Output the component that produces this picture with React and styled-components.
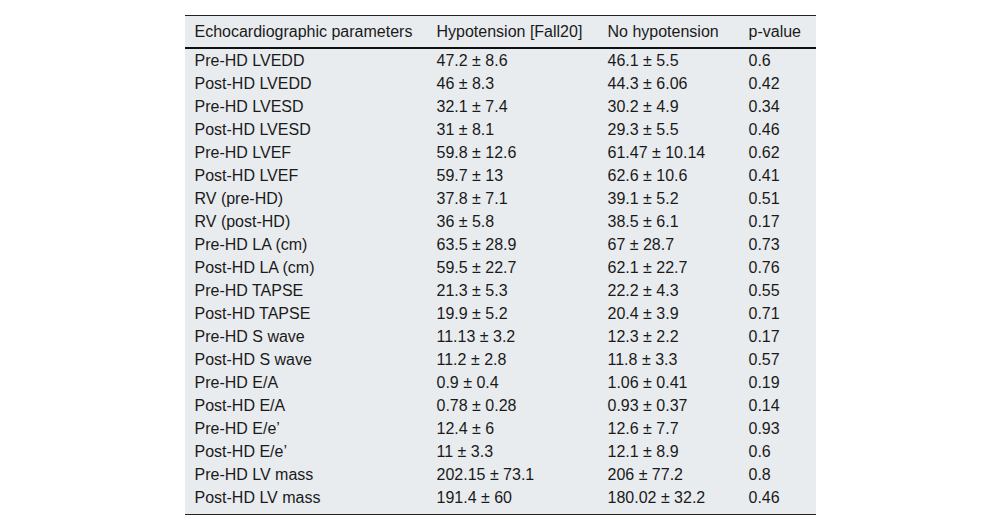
import React from 'react';
import styled, { createGlobalStyle } from 'styled-components';

const GlobalStyle = createGlobalStyle`
  body {
    margin: 0;
    background: #fff;
    font-family: 'Liberation Sans', Arial, sans-serif;
  }
`;

const Page = styled.div`
  display: flex;
  justify-content: center;
  padding-top: 15px;
`;

const Table = styled.table`
  width: 631px;
  border-collapse: collapse;
  table-layout: fixed;
  background: #e9ecef;
  color: #1a1a1a;
  font-size: 16px;
  border-top: 1px solid #222;
  border-bottom: 1px solid #222;
`;

const Col = styled.col`
  width: ${(p) => p.$w}px;
`;

const HeadCell = styled.th`
  text-align: left;
  font-weight: normal;
  padding: 0 10px;
  height: 31px;
  border-bottom: 2px solid #111;
  white-space: nowrap;
`;

const Row = styled.tr`
  td {
    padding-bottom: ${(p) => (p.$last ? '5px' : '0')};
  }
`;

const Cell = styled.td`
  padding: 0 10px;
  height: 23px;
  white-space: nowrap;
`;

const widths = [242, 171, 141, 77];

const rows = [
  ['Pre-HD LVEDD', '47.2 ± 8.6', '46.1 ± 5.5', '0.6'],
  ['Post-HD LVEDD', '46 ± 8.3', '44.3 ± 6.06', '0.42'],
  ['Pre-HD LVESD', '32.1 ± 7.4', '30.2 ± 4.9', '0.34'],
  ['Post-HD LVESD', '31 ± 8.1', '29.3 ± 5.5', '0.46'],
  ['Pre-HD LVEF', '59.8 ± 12.6', '61.47 ± 10.14', '0.62'],
  ['Post-HD LVEF', '59.7 ± 13', '62.6 ± 10.6', '0.41'],
  ['RV (pre-HD)', '37.8 ± 7.1', '39.1 ± 5.2', '0.51'],
  ['RV (post-HD)', '36 ± 5.8', '38.5 ± 6.1', '0.17'],
  ['Pre-HD LA (cm)', '63.5 ± 28.9', '67 ± 28.7', '0.73'],
  ['Post-HD LA (cm)', '59.5 ± 22.7', '62.1 ± 22.7', '0.76'],
  ['Pre-HD TAPSE', '21.3 ± 5.3', '22.2 ± 4.3', '0.55'],
  ['Post-HD TAPSE', '19.9 ± 5.2', '20.4 ± 3.9', '0.71'],
  ['Pre-HD S wave', '11.13 ± 3.2', '12.3 ± 2.2', '0.17'],
  ['Post-HD S wave', '11.2 ± 2.8', '11.8 ± 3.3', '0.57'],
  ['Pre-HD E/A', '0.9 ± 0.4', '1.06 ± 0.41', '0.19'],
  ['Post-HD E/A', '0.78 ± 0.28', '0.93 ± 0.37', '0.14'],
  ['Pre-HD E/e’', '12.4 ± 6', '12.6 ± 7.7', '0.93'],
  ['Post-HD E/e’', '11 ± 3.3', '12.1 ± 8.9', '0.6'],
  ['Pre-HD LV mass', '202.15 ± 73.1', '206 ± 77.2', '0.8'],
  ['Post-HD LV mass', '191.4 ± 60', '180.02 ± 32.2', '0.46'],
];

const App = () => {
  return (
    <>
      <GlobalStyle />
      <Page>
        <Table>
          <colgroup>
            {widths.map((w, i) => (
              <Col key={i} $w={w} />
            ))}
          </colgroup>
          <thead>
            <tr>
              <HeadCell>Echocardiographic parameters</HeadCell>
              <HeadCell>Hypotension [Fall20]</HeadCell>
              <HeadCell>No hypotension</HeadCell>
              <HeadCell>p-value</HeadCell>
            </tr>
          </thead>
          <tbody>
            {rows.map((r, i) => (
              <Row key={i} $last={i === rows.length - 1}>
                {r.map((c, j) => (
                  <Cell key={j}>{c}</Cell>
                ))}
              </Row>
            ))}
          </tbody>
        </Table>
      </Page>
    </>
  );
};

export default App;
